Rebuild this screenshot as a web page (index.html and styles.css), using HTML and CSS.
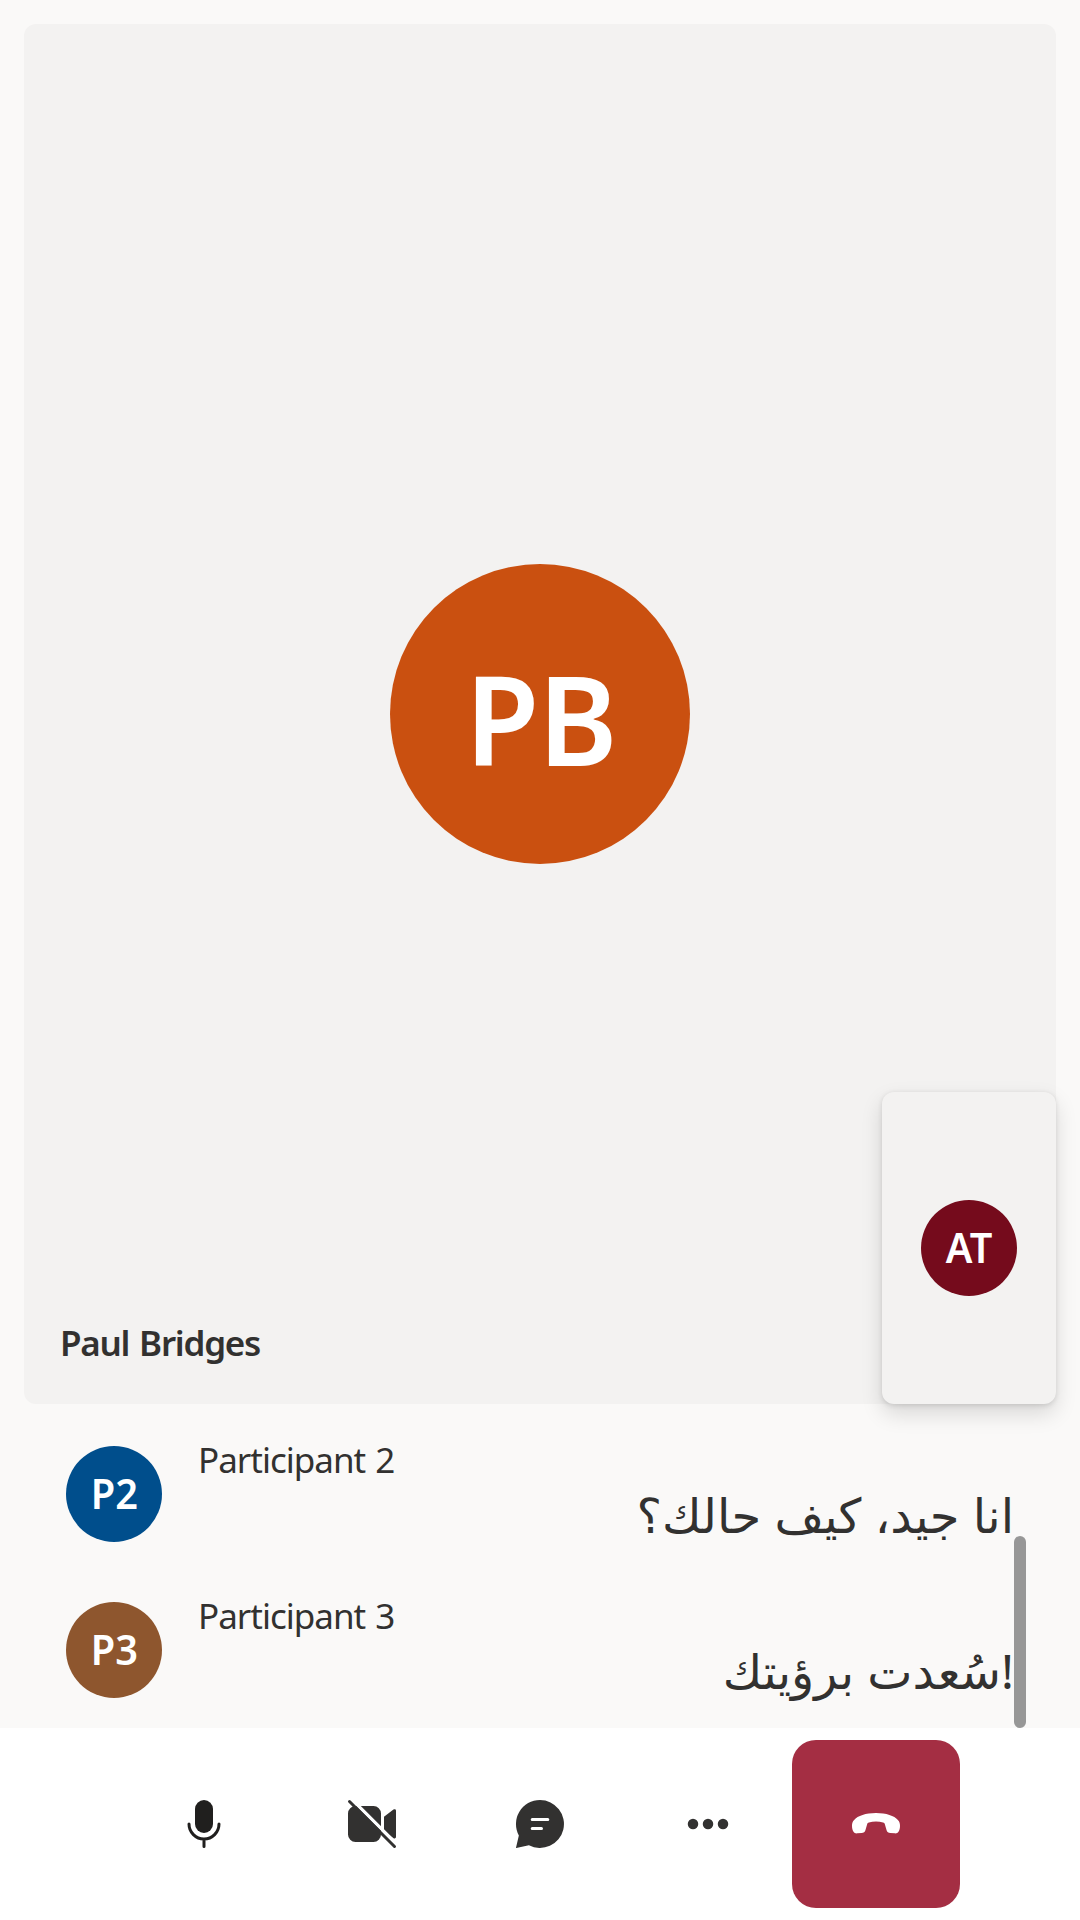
FILE: index.html
```html
<!DOCTYPE html>
<html lang="en">
<head>
<meta charset="utf-8">
<title>Call</title>
<link rel="stylesheet" href="styles.css">
</head>
<body>
<div class="call">
  <main class="stage">
    <section class="tile">
      <div class="avatar avatar-large"><span>PB</span></div>
      <div class="tile-name">Paul Bridges</div>
      <aside class="local-tile">
        <div class="avatar maroon"><span>AT</span></div>
      </aside>
    </section>
  </main>
  <section class="captions">
    <ul class="caption-list">
      <li class="caption">
        <div class="avatar blue"><span>P2</span></div>
        <div class="caption-body">
          <div class="speaker">Participant 2</div>
          <div class="line" lang="ar">انا جيد، كيف حالك؟</div>
        </div>
      </li>
      <li class="caption">
        <div class="avatar brown"><span>P3</span></div>
        <div class="caption-body">
          <div class="speaker">Participant 3</div>
          <div class="line" lang="ar">سُعدت برؤيتك!</div>
        </div>
      </li>
    </ul>
    <div class="scroll-track"><div class="scroll-thumb"></div></div>
  </section>
  <nav class="controls">
    <button class="control mic" aria-label="Mute">
      <svg viewBox="0 0 20 20"><rect x="7" y="2" width="6" height="11" rx="3" fill="currentColor"/><path d="M5 10a5 5 0 0 0 10 0M10 15v2.5" fill="none" stroke="currentColor" stroke-linecap="round"/></svg>
    </button>
    <button class="control" aria-label="Turn on camera">
      <svg viewBox="0 0 20 20"><path d="M4.5 4h6A2.5 2.5 0 0 1 13 6.5v7a2.5 2.5 0 0 1-2.5 2.5h-6A2.5 2.5 0 0 1 2 13.5v-7A2.5 2.5 0 0 1 4.5 4zM14 7.6l3.15-2.45A.55.55 0 0 1 18 5.6v8.7a.55.55 0 0 1-.85.45L14 12.3z" fill="currentColor"/><path d="M2.8 1.3L18.3 16.8" stroke="#fff" stroke-width="1.1"/><path d="M2.5 2.5l15 15" stroke="currentColor" stroke-linecap="round"/></svg>
    </button>
    <button class="control" aria-label="Chat">
      <svg viewBox="0 0 20 20"><path d="M10 2a8 8 0 1 1-3.7 15.1L2.1 18a.1.1 0 0 1-.1-.1L2.95 13.8A8 8 0 0 1 10 2z" fill="currentColor"/><path d="M7.4 8.5h5.2M7.4 11.5h3.1" stroke="#fff" stroke-linecap="round"/></svg>
    </button>
    <button class="control" aria-label="More options">
      <svg viewBox="0 0 20 20" fill="currentColor"><circle cx="5" cy="10" r="1.75"/><circle cx="10" cy="10" r="1.75"/><circle cx="15" cy="10" r="1.75"/></svg>
    </button>
    <button class="control leave" aria-label="Leave call">
      <svg viewBox="0 0 20 20" fill="currentColor"><path d="M10 6.35c3.4 0 6.1.95 7.3 2.3.55.6.7 1.2.7 1.95 0 .8-.15 1.5-.5 2-.3.45-.7.57-1.25.52l-1.45-.15c-.7-.07-1.08-.3-1.27-.9L12.95 10.1c-.1-.35-.25-.45-.6-.58-.7-.24-1.5-.34-2.35-.34s-1.65.1-2.35.34c-.35.13-.5.23-.6.58L6.47 12.07c-.2.6-.57.83-1.27.9l-1.45.15c-.55.05-.95-.07-1.25-.52-.35-.5-.5-1.2-.5-2 0-.75.15-1.35.7-1.95C3.9 7.3 6.6 6.35 10 6.35z"/></svg>
    </button>
  </nav>
</div>
</body>
</html>
```
FILE: styles.css
```css
* { box-sizing: border-box; }
body { margin: 0; background: #faf9f8; color: #323130; font-family: "Noto Sans", "DejaVu Sans", sans-serif; }
.call { width: 1080px; height: 1920px; display: flex; flex-direction: column; overflow: hidden; }
.stage { height: 1404px; padding: 24px 24px 0; display: flex; }
.tile { position: relative; flex: 1; display: flex; align-items: center; justify-content: center; border-radius: 12px; background: #f3f2f1; }
.avatar { width: 96px; height: 96px; padding-bottom: 2px; flex: none; border-radius: 50%; display: flex; align-items: center; justify-content: center; color: #fff; font-size: 41px; line-height: 48px; font-weight: 600; }
.avatar span { transform: scaleX(.97); }
.avatar-large { width: 300px; height: 300px; padding: 7px 0 0 1px; background: #ca5010; font-size: 124px; line-height: 140px; letter-spacing: -1px; }
.maroon { background: #750b1c; }
.blue { background: #004e8c; }
.brown { background: #8e562e; }
.tile-name { position: absolute; left: 36px; bottom: 37px; font-size: 35px; line-height: 48px; font-weight: 600; letter-spacing: -1.25px; word-spacing: 2px; white-space: nowrap; }
.local-tile { position: absolute; right: 0; bottom: 0; width: 174px; height: 312px; display: flex; align-items: center; justify-content: center; border-radius: 12px; background: #f3f2f1; box-shadow: 0 9.6px 21.6px rgba(0, 0, 0, .132), 0 1.8px 5.4px rgba(0, 0, 0, .108); }
.captions { height: 324px; padding: 0 54px 0 66px; display: flex; }
.caption-list { flex: 1; margin: 0; padding: 30px 0 0; list-style: none; }
.caption { height: 156px; padding-top: 12px; display: flex; gap: 36px; }
.caption-body { flex: 1; }
.speaker { height: 33px; font-size: 35px; line-height: 28px; letter-spacing: -1px; word-spacing: 2px; }
.line { height: 72px; text-align: right; font-size: 48px; line-height: 72px; word-spacing: 0.7px; white-space: nowrap; }
.scroll-track { width: 12px; display: flex; align-items: flex-end; }
.scroll-thumb { width: 12px; height: 192px; border-radius: 6px; background: #979797; }
.controls { height: 192px; background: #fff; display: flex; align-items: center; justify-content: center; }
.control { width: 168px; height: 168px; padding: 0; border: 0; border-radius: 24px; background: none; color: #323130; display: flex; align-items: center; justify-content: center; }
.control svg { width: 60px; height: 60px; display: block; }
.mic { color: #201f1e; }
.leave { background: #a42e43; color: #fff; }
```
